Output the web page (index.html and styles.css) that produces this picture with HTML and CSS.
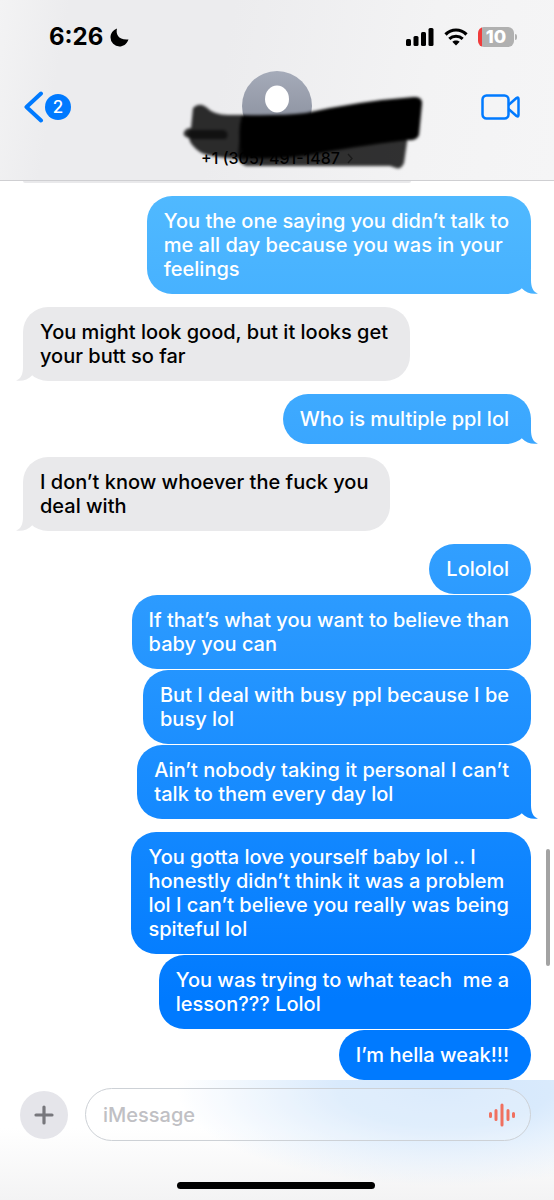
FILE: index.html
```
<!DOCTYPE html>
<html lang="en">

<head>
  <meta charset="utf-8">
  <meta name="viewport" content="width=device-width, initial-scale=1">
  <title>Messages</title>
  <link rel="stylesheet" href="styles.css">
</head>

<body>
  <header class="header">
    <div class="status">
      <div class="status-time">
        <span>6:26</span>
        <svg width="19" height="19" viewBox="0 0 19 19"><path d="M7 0.5C5.500 6 8.500 12.500 18.500 11.500C16.500 16.500 13 18.500 9.500 18.500A9 9 0 0 1 0.500 9.500C0.500 5.500 3 2 7 0.500Z" fill="#000"/></svg>
      </div>
      <div class="status-icons">
        <svg width="28" height="18" viewBox="0 0 28 18">
          <rect x="0" y="11" width="5" height="7" rx="1.500"/>
          <rect x="7.500" y="8" width="5" height="10" rx="1.500"/>
          <rect x="15" y="4" width="5" height="14" rx="1.500"/>
          <rect x="22.500" y="0" width="5" height="18" rx="1.500"/>
        </svg>
        <svg width="24" height="18" viewBox="0 0 24 18">
          <path d="M1.500 6.500C7.500 0.500 16.500 0.500 22.500 6.500" fill="none" stroke="#000" stroke-width="3.200"/>
          <path d="M5.300 10.800C9 7.300 15 7.300 18.700 10.800" fill="none" stroke="#000" stroke-width="3"/>
          <path d="M12 17.500L8.300 13.800C10.300 12 13.700 12 15.700 13.800Z"/>
        </svg>
        <div class="battery"><span>10</span></div>
      </div>
    </div>

    <nav class="nav">
      <button class="back" type="button" aria-label="Back">
        <svg width="20" height="32" viewBox="0 0 20 32"><path d="M17 2.500L2.500 16L17 29.500" fill="none" stroke="#007aff" stroke-width="4" stroke-linecap="round" stroke-linejoin="round"/></svg>
        <span class="count">2</span>
      </button>
      <div class="contact">
        <svg width="70" height="70" viewBox="0 0 70 70">
          <defs>
            <linearGradient id="avatar" x1="0" y1="0" x2="0" y2="1">
              <stop offset="0" stop-color="#a5abb9"/>
              <stop offset="1" stop-color="#858a98"/>
            </linearGradient>
          </defs>
          <circle cx="35" cy="35" r="35" fill="url(#avatar)"/>
          <ellipse cx="35" cy="28" rx="12" ry="13.500" fill="#fff"/>
        </svg>
        <div class="number">+1 (305) 491-1487 <svg width="6" height="11" viewBox="0 0 6 11"><path d="M1 1l4 4.500L1 10" fill="none" stroke="#888" stroke-width="1.500"/></svg></div>
        <svg class="ink" width="250" height="110" viewBox="180 85 250 110">
          <defs>
            <filter id="soft"><feGaussianBlur stdDeviation="1.500"/></filter>
          </defs>
          <g filter="url(#soft)">
            <path d="M193 108Q199 102 206 107Q214 115 228 115H245V159Q210 158 200 152Q190 145 189 138Q182 136 184 132Q186 128 191 128Z" fill="#000" opacity="0.820"/>
            <path d="M190 130H224Q230 133 226 139H192Q184 137 190 130Z" fill="#000" opacity="0.600"/>
            <path d="M242 115Q280 116 306 113Q360 101 414 97Q423 97 422 104L419 135Q417 141 408 140Q350 147 310 155Q275 160 244 158Q236 135 242 115Z" fill="#000"/>
            <path d="M240 135L408 135L404 163Q401 170 396 168L390 166H246Q238 163 238 155Z" fill="#000" opacity="0.800"/>
          </g>
        </svg>
      </div>
      <button class="video" type="button" aria-label="FaceTime">
        <svg width="39" height="26" viewBox="0 0 39 26" fill="none" stroke="#007aff" stroke-width="2.500" stroke-linejoin="round">
          <rect x="1.500" y="1.500" width="26" height="23" rx="4"/>
          <path d="M27.500 11L35.500 4Q37.500 2.800 37.500 5V21Q37.500 23.200 35.500 22L27.500 15"/>
        </svg>
      </button>
    </nav>
  </header>

  <main class="chat">
    <div class="previous"></div>

    <div class="group sent">
      <p class="bubble tail">You the one saying you didn’t talk to<br>me all day because you was in your<br>feelings</p>
    </div>
    <div class="group">
      <p class="bubble tail">You might look good, but it looks get<br>your butt so far</p>
    </div>
    <div class="group sent">
      <p class="bubble tail">Who is multiple ppl lol</p>
    </div>
    <div class="group">
      <p class="bubble tail">I don’t know whoever the fuck you<br>deal with</p>
    </div>
    <div class="group sent">
      <p class="bubble">Lololol</p>
      <p class="bubble">If that’s what you want to believe than<br>baby you can</p>
      <p class="bubble">But I deal with busy ppl because I be<br>busy lol</p>
      <p class="bubble tail">Ain’t nobody taking it personal I can’t<br>talk to them every day lol</p>
    </div>
    <div class="group sent">
      <p class="bubble">You gotta love yourself baby lol .. I<br>honestly didn’t think it was a problem<br>lol I can’t believe you really was being<br>spiteful lol</p>
      <p class="bubble">You was trying to what teach&nbsp; me a<br>lesson??? Lolol</p>
      <p class="bubble">I’m hella weak!!!</p>
    </div>

    <div class="scrollbar"></div>
  </main>

  <footer class="footer">
    <form class="composer">
      <button class="plus" type="button" aria-label="Add">
        <svg width="20" height="20" viewBox="0 0 20 20"><path d="M10 2V18M2 10H18" stroke="#77777c" stroke-width="3.200" stroke-linecap="round"/></svg>
      </button>
      <div class="field">
        <input type="text" placeholder="iMessage" aria-label="iMessage">
        <button class="audio" type="button" aria-label="Record audio">
          <svg width="28" height="24" viewBox="0 0 28 24"><path d="M2.500 10.500V13.500M8 7.500V16.500M14 2V22M20 7.500V16.500M25.500 10.500V13.500" stroke="#f0705f" stroke-width="3" stroke-linecap="round"/></svg>
        </button>
      </div>
    </form>
    <div class="home"></div>
  </footer>
</body>

</html>
```
FILE: styles.css
```
* {
  box-sizing: border-box;
}
body {
  margin: 0;
  min-height: 100vh;
  display: flex;
  flex-direction: column;
  background-color: #fff;
  color: #000;
  font-family: Inter, "Liberation Sans", sans-serif;
  font-size: 20px;
  font-weight: 500;
  line-height: 24px;
}
button {
  border: none;
  background: none;
  padding: 0;
  font: inherit;
  display: flex;
  align-items: center;
  cursor: pointer;
}
svg {
  display: block;
}

/* header */
.header {
  background: linear-gradient(100deg, #f3f3f4 0%, #ececee 12%, #ececee 40%, #f3f3f4 75%, #f5f5f6 100%);
  border-bottom: 1px solid #cfcfd2;
}
.status {
  display: flex;
  justify-content: space-between;
  align-items: center;
  height: 71px;
  padding: 3px 40px 0 49px;
}
.status-time {
  display: flex;
  align-items: center;
  gap: 7px;
  font-size: 24px;
  font-weight: 700;
}
.status-icons {
  display: flex;
  align-items: center;
  gap: 10px;
}
.battery {
  position: relative;
  width: 36px;
  height: 20px;
  border-radius: 6px;
  background: linear-gradient(90deg, #f03c3c 4px, #b0b0b0 4px);
  color: #fff;
  font-size: 18px;
  font-weight: 800;
  line-height: 20px;
  text-align: center;
}
.battery::after {
  content: "";
  position: absolute;
  right: -3px;
  top: 7px;
  width: 2px;
  height: 6px;
  border-radius: 0 2px 2px 0;
  background-color: #b0b0b0;
}
.nav {
  display: grid;
  grid-template-columns: 1fr auto 1fr;
  padding: 0 24px 12px;
}
.back {
  align-self: start;
  justify-self: start;
  gap: 1px;
  height: 71px;
}
.count {
  width: 26px;
  height: 26px;
  border-radius: 50%;
  background-color: #007aff;
  color: #fff;
  font-size: 17px;
  line-height: 26px;
  text-align: center;
}
.contact {
  position: relative;
  display: flex;
  flex-direction: column;
  align-items: center;
  gap: 7px;
}
.number {
  display: flex;
  align-items: center;
  gap: 7px;
  font-size: 16px;
  line-height: 20px;
}
.ink {
  position: absolute;
  left: 50%;
  top: 14px;
  margin-left: -97px;
}
.video {
  align-self: start;
  justify-self: end;
  height: 71px;
  padding-right: 10px;
}

/* messages */
.chat {
  position: relative;
  flex: 1;
  display: flex;
  flex-direction: column;
  gap: 13px;
  padding: 0 23px;
}
.previous {
  width: 388px;
  height: 2px;
  border-radius: 0 0 24px 24px;
  background-color: #e9e9eb;
}
.group {
  display: flex;
  flex-direction: column;
  align-items: flex-start;
  gap: 1px;
}
.group.sent {
  align-items: flex-end;
}
.bubble {
  position: relative;
  margin: 0;
  padding: 13px 22px 13px 17px;
  border-radius: 25px;
  background-color: #e9e9eb;
  white-space: nowrap;
}
.sent .bubble {
  background: linear-gradient(180deg, #51baff 180px, #2f9dff 570px, #007aff 1000px) fixed;
  color: #fff;
}
.tail::after {
  content: "";
  position: absolute;
  left: -7px;
  bottom: 0;
  width: 24px;
  height: 24px;
  background: inherit;
  clip-path: path("M7 0V10C7 17 5 22 0 23.500C6 24.500 12 23 16 18.500V0Z");
}
.sent .tail::after {
  left: auto;
  right: -7px;
  clip-path: path("M17 0V10C17 17 19 22 24 23.500C18 24.500 12 23 8 18.500V0Z");
}
.scrollbar {
  position: absolute;
  right: 4px;
  top: 668px;
  width: 4px;
  height: 117px;
  border-radius: 2px;
  background-color: #a3a3a3;
}

/* composer */
.footer {
  position: relative;
  display: flex;
  flex-direction: column;
  gap: 41px;
  padding: 8px 23px 11px 20px;
  background: radial-gradient(ellipse 48% 80% at 80% 8%, #d3e7fc 0%, #d9eafc 40%, rgba(255, 255, 255, 0) 100%), linear-gradient(180deg, #fff 40%, #f3f3f4 100%);
}
.composer {
  display: flex;
  align-items: center;
  gap: 17px;
  margin: 0;
}
.plus {
  flex: none;
  justify-content: center;
  width: 48px;
  height: 48px;
  border-radius: 50%;
  background-color: #e5e5ea;
}
.field {
  flex: 1;
  display: flex;
  align-items: center;
  height: 53px;
  padding: 0 14px 0 17px;
  border: 1px solid #cdd1d6;
  border-radius: 27px;
  background-color: rgba(255, 255, 255, 0.2);
}
.field input {
  flex: 1;
  min-width: 0;
  padding: 0;
  border: none;
  outline: none;
  background: none;
  font: inherit;
}
.field input::placeholder {
  color: #c0c0c4;
  opacity: 1;
}
.home {
  align-self: center;
  width: 198px;
  height: 7px;
  border-radius: 4px;
  background-color: #000;
}
```
